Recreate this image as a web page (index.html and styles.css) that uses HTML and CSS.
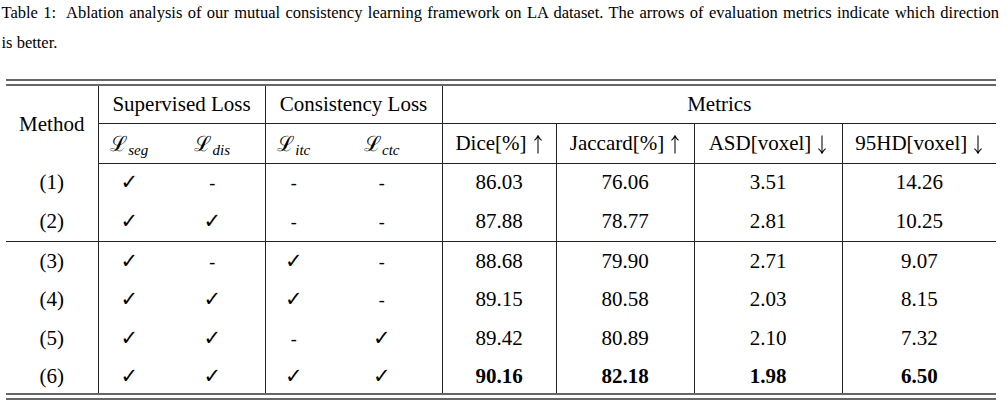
FILE: index.html
```html
<!DOCTYPE html>
<html lang="en">
<head>
<meta charset="utf-8">
<title>Table 1: Ablation analysis</title>
<link rel="stylesheet" href="styles.css">
</head>
<body>
<div class="page">
  <p class="caption">
    <span class="caption-line first">Table 1:&nbsp; Ablation analysis of our mutual consistency learning framework on LA dataset. The arrows of evaluation metrics indicate which direction</span>
    <span class="caption-line">is better.</span>
  </p>
  <div class="frame">
    <table class="ablation">
      <colgroup>
        <col class="w-method"><col class="w-seg"><col class="w-dis"><col class="w-itc"><col class="w-ctc">
        <col class="w-dice"><col class="w-jac"><col class="w-asd"><col class="w-hd">
      </colgroup>
      <thead>
        <tr class="h1">
          <th rowspan="2" class="vr">Method</th>
          <th colspan="2" class="grp vr">Supervised Loss</th>
          <th colspan="2" class="grp vr">Consistency Loss</th>
          <th colspan="4" class="grp">Metrics</th>
        </tr>
        <tr class="h2">
          <th><span class="loss">ℒ</span><span class="sub">seg</span></th>
          <th class="vr"><span class="loss">ℒ</span><span class="sub">dis</span></th>
          <th><span class="loss">ℒ</span><span class="sub">itc</span></th>
          <th class="vr"><span class="loss">ℒ</span><span class="sub">ctc</span></th>
          <th class="vr">Dice[%]<svg class="arrow" viewBox="0 0 10 20" aria-label="up"><path d="M5 19.5V1.2M1.2 5.6Q3.6 3.8 5 0.8Q6.4 3.8 8.8 5.6"/></svg></th>
          <th class="vr">Jaccard[%]<svg class="arrow" viewBox="0 0 10 20" aria-label="up"><path d="M5 19.5V1.2M1.2 5.6Q3.6 3.8 5 0.8Q6.4 3.8 8.8 5.6"/></svg></th>
          <th class="vr">ASD[voxel]<svg class="arrow" viewBox="0 0 10 20" aria-label="down"><path d="M5 0.5V18.8M1.2 14.4Q3.6 16.2 5 19.2Q6.4 16.2 8.8 14.4"/></svg></th>
          <th>95HD[voxel]<svg class="arrow" viewBox="0 0 10 20" aria-label="down"><path d="M5 0.5V18.8M1.2 14.4Q3.6 16.2 5 19.2Q6.4 16.2 8.8 14.4"/></svg></th>
        </tr>
      </thead>
      <tbody class="block first-block">
        <tr class="r-a"><td class="vr">(1)</td><td><span class="ck">✓</span></td><td class="vr"><span class="dash">-</span></td><td><span class="dash">-</span></td><td class="vr"><span class="dash">-</span></td><td class="vr">86.03</td><td class="vr">76.06</td><td class="vr">3.51</td><td>14.26</td></tr>
        <tr class="r-b"><td class="vr">(2)</td><td><span class="ck">✓</span></td><td class="vr"><span class="ck">✓</span></td><td><span class="dash">-</span></td><td class="vr"><span class="dash">-</span></td><td class="vr">87.88</td><td class="vr">78.77</td><td class="vr">2.81</td><td>10.25</td></tr>
      </tbody>
      <tbody class="block second-block">
        <tr class="r-c"><td class="vr">(3)</td><td><span class="ck">✓</span></td><td class="vr"><span class="dash">-</span></td><td><span class="ck">✓</span></td><td class="vr"><span class="dash">-</span></td><td class="vr">88.68</td><td class="vr">79.90</td><td class="vr">2.71</td><td>9.07</td></tr>
        <tr class="r-c"><td class="vr">(4)</td><td><span class="ck">✓</span></td><td class="vr"><span class="ck">✓</span></td><td><span class="ck">✓</span></td><td class="vr"><span class="dash">-</span></td><td class="vr">89.15</td><td class="vr">80.58</td><td class="vr">2.03</td><td>8.15</td></tr>
        <tr class="r-d"><td class="vr">(5)</td><td><span class="ck">✓</span></td><td class="vr"><span class="ck">✓</span></td><td><span class="dash">-</span></td><td class="vr"><span class="ck">✓</span></td><td class="vr">89.42</td><td class="vr">80.89</td><td class="vr">2.10</td><td>7.32</td></tr>
        <tr class="r-c"><td class="vr">(6)</td><td><span class="ck">✓</span></td><td class="vr"><span class="ck">✓</span></td><td><span class="ck">✓</span></td><td class="vr"><span class="ck">✓</span></td><td class="vr best">90.16</td><td class="vr best">82.18</td><td class="vr best">1.98</td><td class="best">6.50</td></tr>
      </tbody>
    </table>
  </div>
</div>
</body>
</html>
```

FILE: styles.css
```css
html, body {
  margin: 0;
  padding: 0;
  background: #ffffff;
}

.page {
  padding: 0 7px 0 1.5px;
  font-family: "Liberation Serif", "DejaVu Serif", serif;
  color: #000;
}

.caption {
  margin: -2px 0 0 0;
  font-size: 16.5px;
  line-height: 30px;
}

.caption-line {
  display: block;
}

.caption-line.first {
  text-align: justify;
  text-align-last: justify;
}

.frame {
  margin: 21px 0 0 4.5px;
  width: 990px;
  border-top: 2px solid #666;
  border-bottom: 2px solid #666;
  padding: 3px 0;
}

.ablation {
  width: 990px;
  table-layout: fixed;
  border-collapse: collapse;
  border-top: 2px solid #666;
  border-bottom: 2px solid #666;
  font-size: 21px;
}

.w-method { width: 92px; }
.w-seg { width: 62px; }
.w-dis { width: 105px; }
.w-itc { width: 57px; }
.w-ctc { width: 120px; }
.w-dice { width: 114px; }
.w-jac { width: 138px; }
.w-asd { width: 148px; }
.w-hd { width: 154px; }

.ablation th,
.ablation td {
  padding: 0;
  text-align: center;
  vertical-align: middle;
  font-weight: normal;
  white-space: nowrap;
}

.ablation .vr {
  border-right: 1px solid #222;
}

.ablation .grp {
  border-bottom: 1px solid #222;
}

.h1 { height: 38px; }
.h2 { height: 40px; }
.h2 th { border-bottom: 1px solid #222; }

.r-a { height: 39px; }
.r-b { height: 39px; }
.r-c { height: 38px; }
.r-d { height: 39px; }

.ablation .second-block td {
  padding-top: 3px;
}

.second-block tr:first-child td {
  border-top: 1px solid #222;
}

.ablation td.best {
  font-weight: bold;
}

.loss {
  font-family: "DejaVu Serif", serif;
  font-size: 21px;
}

.sub {
  font-style: italic;
  font-size: 15px;
  position: relative;
  top: 4px;
}

.ck {
  font-family: "DejaVu Sans", sans-serif;
  font-size: 21px;
}

.dash {
  font-size: 18px;
}

.arrow {
  width: 10px;
  height: 19px;
  margin-left: 6px;
  vertical-align: -4px;
  fill: none;
  stroke: #000;
  stroke-width: 1.1;
}
```
